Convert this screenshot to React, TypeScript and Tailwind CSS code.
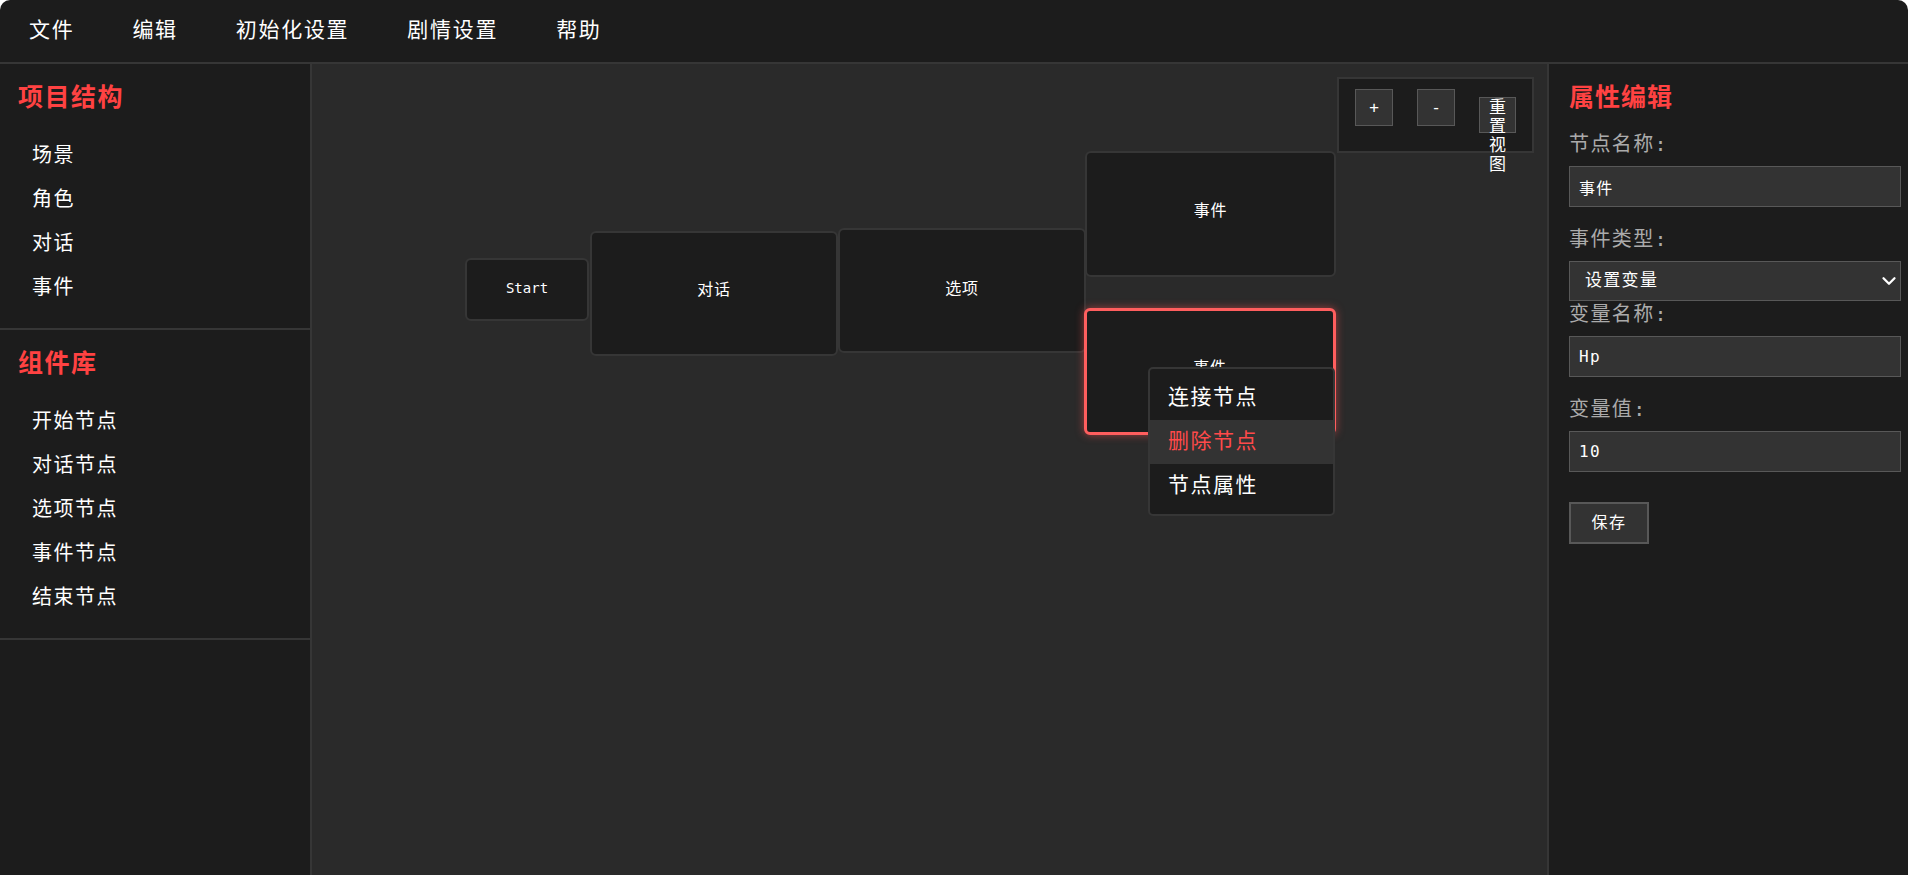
import { ChevronDown } from "lucide-react";

const menus = ["文件", "编辑", "初始化设置", "剧情设置", "帮助"];
const structureItems = ["场景", "角色", "对话", "事件"];
const libraryItems = ["开始节点", "对话节点", "选项节点", "事件节点", "结束节点"];

type FlowNode = {
  id: string;
  label: string;
  box: string;
  pad: string;
  selected?: boolean;
  latin?: boolean;
};

const nodes: FlowNode[] = [
  { id: "start", label: "Start", box: "left-[153px] top-[194px] w-[124px] h-[63px]", pad: "pb-[3px]", latin: true },
  { id: "dialog", label: "对话", box: "left-[278px] top-[167px] w-[248px] h-[125px]", pad: "pb-[7px]" },
  { id: "choice", label: "选项", box: "left-[526px] top-[164px] w-[248px] h-[125px]", pad: "pb-[4px]" },
  { id: "event", label: "事件", box: "left-[773px] top-[87px] w-[251px] h-[126px]", pad: "pb-[7px]" },
  { id: "event-2", label: "事件", box: "left-[772px] top-[244px] w-[252px] h-[127px]", pad: "pb-[7px]", selected: true },
];

function SidebarSection({ title, items }: { title: string; items: string[] }) {
  return (
    <section className="border-b-2 border-[#363636] px-[18px] pt-[18px] pb-[19px]">
      <h3 className="text-[25px] leading-[32px] font-bold tracking-[1.5px] text-[#ff4242]">{title}</h3>
      <ul className="mt-[19px]">
        {items.map((item) => (
          <li
            key={item}
            className="flex h-[44px] items-center pl-[14px] text-[20px] tracking-[1.5px] text-white"
          >
            {item}
          </li>
        ))}
      </ul>
    </section>
  );
}

function Field({ label, value, mb = "mb-[20px]" }: { label: string; value: string; mb?: string }) {
  return (
    <>
      <label className="mb-[10px] block text-[20px] leading-[24px] tracking-[1.4px] text-[#ababab]">
        {label}
      </label>
      <input
        readOnly
        value={value}
        className={`${mb} block h-[41px] w-[332px] border border-[#585858] bg-[#333333] px-[9px] text-[16px] tracking-[1.3px] text-white outline-none`}
      />
    </>
  );
}

export default function App() {
  return (
    <div className="flex h-[875px] flex-col overflow-hidden rounded-t-[10px] bg-[#1c1c1c] font-['DejaVu_Sans_Mono','Noto_Sans_CJK_SC',monospace] text-white">
      <header className="flex h-[64px] shrink-0 items-center border-b-2 border-[#363636]">
        {menus.map((menu) => (
          <span key={menu} className="px-[29px] text-[21px] tracking-[1.7px] text-white">
            {menu}
          </span>
        ))}
      </header>

      <div className="flex min-h-0 flex-1">
        <aside className="w-[312px] shrink-0 border-r-2 border-[#363636] bg-[#1c1c1c]">
          <SidebarSection title="项目结构" items={structureItems} />
          <SidebarSection title="组件库" items={libraryItems} />
        </aside>

        <main className="relative flex-1 overflow-hidden bg-[#2a2a2a]">
          <div className="absolute top-[13px] right-[13px] flex items-start gap-[24px] border-2 border-[#363636] bg-[#1c1c1c] px-[16px] pt-[10px] pb-[18px]">
            <button className="h-[37px] w-[38px] border border-[#585858] bg-[#333333] text-[16px] text-white">+</button>
            <button className="h-[37px] w-[38px] border border-[#585858] bg-[#333333] text-[16px] text-white">-</button>
            <button className="mt-[8px] flex h-[36px] w-[37px] flex-col items-center justify-start border border-[#585858] bg-[#333333] px-[8px] text-[17px] leading-[19px] text-white">
              重置视图
            </button>
          </div>

          {nodes.map((node) => (
            <div
              key={node.id}
              className={`absolute ${node.box} ${node.pad} flex items-center justify-center rounded-[6px] bg-[#1c1c1c] ${
                node.selected
                  ? "border-[3px] border-[#ff5e5e] shadow-[0_0_9px_rgba(255,80,80,0.55)]"
                  : "border-2 border-[#363636]"
              }`}
            >
              <span className={node.latin ? "text-[14px] text-white" : "text-[16px] tracking-[0.7px] text-white"}>
                {node.label}
              </span>
            </div>
          ))}

          <ul className="absolute top-[303px] left-[836px] w-[187px] rounded-[5px] border-2 border-[#363636] bg-[#1c1c1c] pt-[7px] pb-[6px]">
            <li className="flex h-[44px] items-center pl-[18px] text-[21px] tracking-[1.5px] text-white">连接节点</li>
            <li className="flex h-[44px] items-center bg-[#333333] pl-[18px] text-[21px] tracking-[1.5px] text-[#ff4a4a]">删除节点</li>
            <li className="flex h-[44px] items-center pl-[18px] text-[21px] tracking-[1.5px] text-white">节点属性</li>
          </ul>
        </main>

        <aside className="w-[361px] shrink-0 border-l-2 border-[#363636] bg-[#1c1c1c] pt-[18px] pl-[20px]">
          <h3 className="mb-[18px] text-[25px] leading-[32px] font-bold tracking-[1px] text-[#ff4242]">属性编辑</h3>
          <Field label="节点名称:" value="事件" />

          <label className="mb-[10px] block text-[20px] leading-[24px] tracking-[1.4px] text-[#ababab]">事件类型:</label>
          <div className="relative mb-[1px] w-[332px]">
            <select
              defaultValue="set"
              className="block h-[40px] w-full appearance-none border border-[#585858] bg-[#333333] pl-[15px] text-[17px] tracking-[1.3px] text-white outline-none"
            >
              <option value="set">设置变量</option>
            </select>
            <ChevronDown
              size={22}
              strokeWidth={2.5}
              className="pointer-events-none absolute top-1/2 right-[1px] -translate-y-1/2 text-white"
            />
          </div>

          <Field label="变量名称:" value="Hp" />
          <Field label="变量值:" value="10" mb="mb-[30px]" />

          <button className="h-[42px] w-[80px] border-2 border-[#585858] bg-[#333333] text-[16px] tracking-[1.5px] text-white">
            保存
          </button>
        </aside>
      </div>
    </div>
  );
}
